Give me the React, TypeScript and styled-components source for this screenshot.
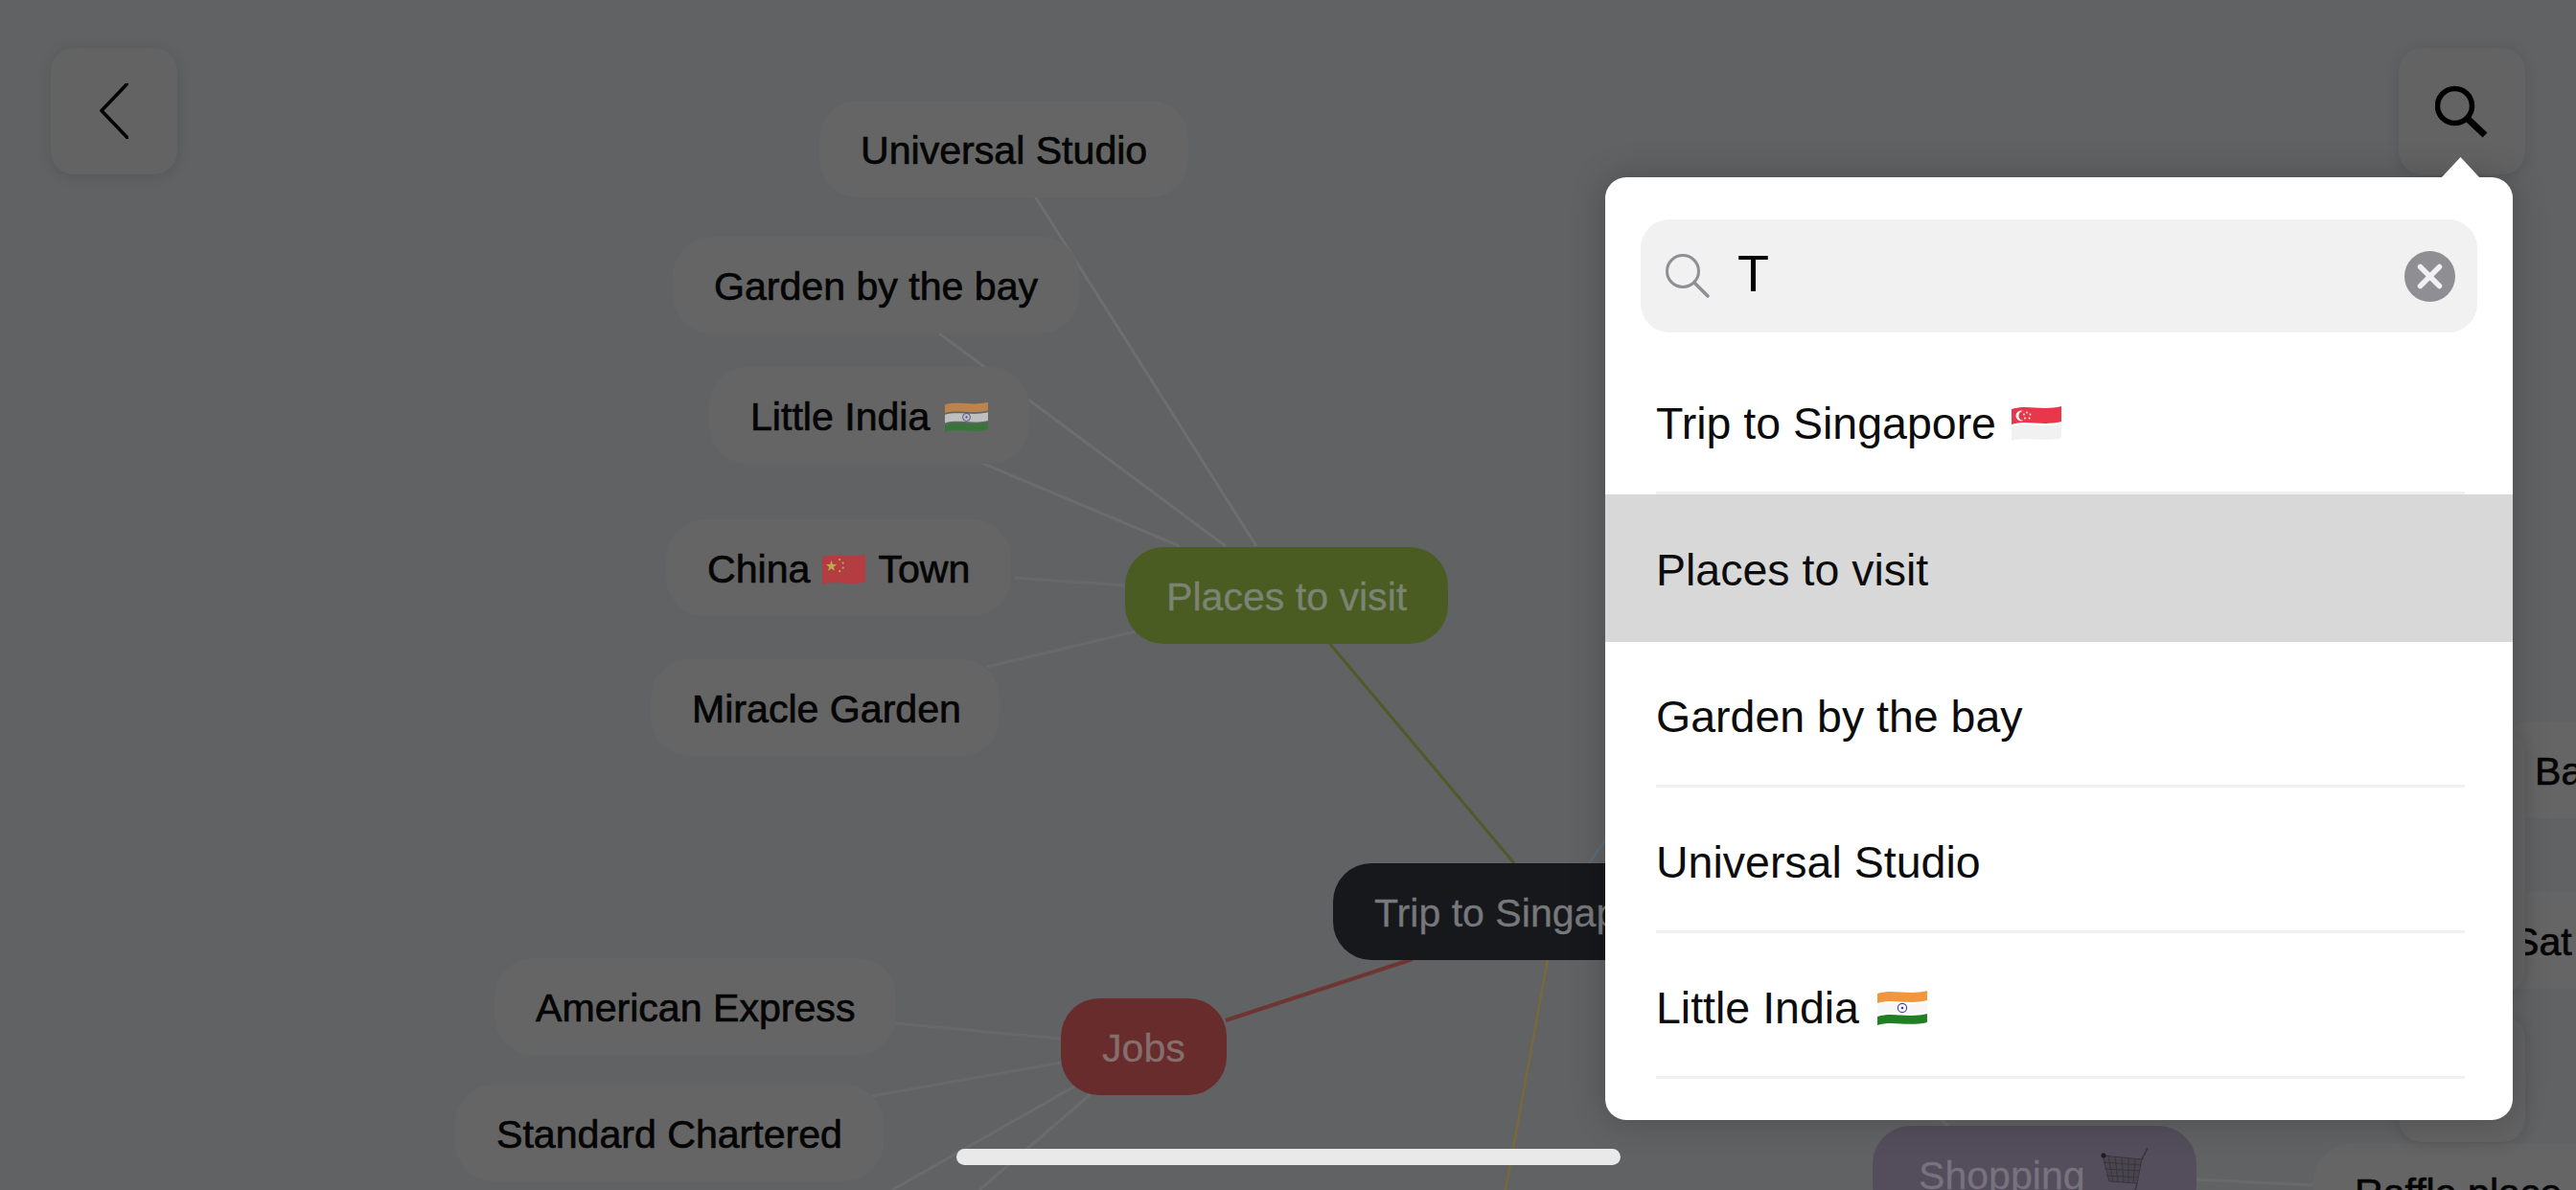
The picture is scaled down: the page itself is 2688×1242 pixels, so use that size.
import React from "react";
import styled, { createGlobalStyle } from "styled-components";

const GlobalStyle = createGlobalStyle`
  html, body {
    margin: 0;
    padding: 0;
    background: #616264;
    overflow: hidden;
  }
  body {
    font-family: "Liberation Sans", Arial, sans-serif;
  }
`;

type Tone = "leaf" | "root" | "green" | "red" | "purple";

const toneBg: Record<Tone, string> = {
  leaf: "#656566",
  root: "#17181b",
  green: "#4a5c22",
  red: "#682c2c",
  purple: "#544d5b",
};

const toneText: Record<Tone, string> = {
  leaf: "#050505",
  root: "#77787b",
  green: "#7b8473",
  red: "#866e6c",
  purple: "#77727d",
};

// wavy flag, the bands are cut along the same wave
const band = (w: number, y0: number, y1: number) => {
  const a = w * 0.3;
  const b = w * 0.62;
  return `M0 ${y0 + 3} C${a} ${y0 - 2} ${b} ${y0 + 5} ${w} ${y0} L${w} ${y1 - 3} C${b} ${y1 + 2} ${a} ${y1 - 5} 0 ${y1} Z`;
};

const FlagSvg = styled.svg<{ $dim?: boolean }>`
  flex: none;
  display: block;
  opacity: ${(p) => (p.$dim ? 0.62 : 1)};
`;

const IndiaFlag = ({ size, dim }: { size: number; dim?: boolean }) => (
  <FlagSvg $dim={dim} width={size} height={size * 0.73} viewBox="0 0 52 38">
    <path d={band(52, 1, 14)} fill="#f0963f" />
    <path d={band(52, 13, 26)} fill="#f7f7f7" />
    <path d={band(52, 25, 37)} fill="#1f7f22" />
    <circle cx="26" cy="19" r="4.6" fill="none" stroke="#3b3f98" strokeWidth="1.1" />
    <circle cx="26" cy="19" r="1.3" fill="#3b3f98" />
  </FlagSvg>
);

const SingaporeFlag = ({ size }: { size: number }) => (
  <FlagSvg width={size} height={size * 0.73} viewBox="0 0 52 38">
    <path d={band(52, 1, 20)} fill="#e8374a" />
    <path d={band(52, 19, 37)} fill="#f1f1f1" />
    <circle cx="10" cy="11" r="5.5" fill="#f7f7f7" />
    <circle cx="12.4" cy="11" r="5" fill="#e8374a" />
    <g fill="#f7f7f7">
      <circle cx="16" cy="7.5" r="0.9" />
      <circle cx="19.5" cy="9.5" r="0.9" />
      <circle cx="18.5" cy="13.5" r="0.9" />
      <circle cx="14" cy="13.5" r="0.9" />
      <circle cx="13" cy="9.5" r="0.9" />
    </g>
  </FlagSvg>
);

const ChinaFlag = ({ size }: { size: number }) => (
  <FlagSvg $dim width={size} height={size * 0.73} viewBox="0 0 52 38">
    <path d={band(52, 1, 37)} fill="#e3262c" />
    <path d="M11 8l1.7 4.6 4.9.2-3.9 3 1.4 4.7-4.1-2.7-4.1 2.7 1.4-4.7-3.9-3 4.9-.2z" fill="#f5d33c" />
    <g fill="#f5d33c">
      <circle cx="21" cy="7" r="1.3" />
      <circle cx="25" cy="11" r="1.3" />
      <circle cx="25" cy="17" r="1.3" />
      <circle cx="21" cy="21" r="1.3" />
    </g>
  </FlagSvg>
);

const CartIcon = () => (
  <FlagSvg width={52} height={62} viewBox="0 0 52 62">
    <g stroke="#38353c" fill="none" strokeWidth="1">
      <path d="M2 9L43 13L38 38L9 36Z" fill="#4a4650" />
      <path d="M8 9.5L13 36M15 10L18 37M22 11L24 37M29 12L29 38M36 12.5L34 38" />
      <path d="M3 16L42 19M4 23L41 25M6 30L39 32" />
      <path d="M43 13L49 1M38 38L36 46L9 46" strokeWidth="1.6" />
    </g>
    <circle cx="3" cy="9" r="2.5" fill="#1c1b1f" />
    <circle cx="34" cy="54" r="6" fill="#5f5a63" />
    <circle cx="14" cy="54" r="6" fill="#45414a" />
  </FlagSvg>
);

const Screen = styled.div`
  position: relative;
  width: 2688px;
  height: 1242px;
  overflow: hidden;
  background: #616264;
`;

const Links = styled.svg`
  position: absolute;
  left: 0;
  top: 0;
`;

const Node = styled.div<{ $x: number; $y: number; $tone: Tone; $w?: number; $pad?: number; $gap?: number }>`
  position: absolute;
  left: ${(p) => p.$x}px;
  top: ${(p) => p.$y}px;
  ${(p) => (p.$w ? `width: ${p.$w}px;` : "")}
  height: 101px;
  box-sizing: border-box;
  padding: 4px 43px 0 ${(p) => p.$pad ?? 43}px;
  display: flex;
  align-items: center;
  gap: ${(p) => p.$gap ?? 16}px;
  border-radius: 40px;
  background: ${(p) => toneBg[p.$tone]};
  color: ${(p) => toneText[p.$tone]};
  font-size: 41.1px;
  white-space: nowrap;
  -webkit-text-stroke: ${(p) => (p.$tone === "leaf" ? "0.7px" : "0.3px")} currentColor;
`;

// buttons float over the map, back on the left and the tools on the right
const Controls = styled.div`
  position: absolute;
  inset: 0;
  box-sizing: border-box;
  padding: 50px 53px;
  display: flex;
  justify-content: space-between;
  align-items: flex-start;
`;

const ToolColumn = styled.div`
  display: flex;
  flex-direction: column;
  gap: 23px;
`;

const ToolButton = styled.div<{ $h?: number; $push?: number }>`
  width: 132px;
  height: ${(p) => p.$h ?? 132}px;
  margin-top: ${(p) => p.$push ?? 0}px;
  border-radius: 24px;
  background: #636363;
  box-shadow: 0 2px 14px rgba(0, 0, 0, 0.12);
  display: flex;
  align-items: center;
  justify-content: center;
`;

const Panel = styled.div`
  position: absolute;
  left: 1675px;
  top: 185px;
  width: 947px;
  height: 984px;
  border-radius: 22px;
  background: #fff;
  box-shadow: 0 0 36px rgba(0, 0, 0, 0.22);

  &::before {
    content: "";
    position: absolute;
    left: 872px;
    top: -21px;
    width: 41px;
    height: 22px;
    background: #fff;
    clip-path: polygon(50% 0, 100% 100%, 0 100%);
  }
`;

const PanelBody = styled.div`
  height: 100%;
  border-radius: 22px;
  overflow: hidden;
  padding-top: 44px;
  box-sizing: border-box;
`;

const SearchField = styled.div`
  margin: 0 37px;
  height: 118px;
  box-sizing: border-box;
  padding: 0 23px 0 26px;
  border-radius: 30px;
  background: #f1f1f2;
  display: flex;
  align-items: center;
`;

const SearchText = styled.div`
  flex: 1;
  margin-left: 29px;
  margin-top: -6px;
  font-size: 54px;
  color: #000;
`;

const ResultList = styled.div`
  margin-top: 17px;
`;

const Row = styled.div<{ $active?: boolean; $h: number }>`
  height: ${(p) => p.$h}px;
  padding: 0 50px 0 53px;
  background: ${(p) => (p.$active ? "#d8d8d8" : "#fff")};
`;

const RowInner = styled.div<{ $plain?: boolean; $gap?: number }>`
  height: 100%;
  box-sizing: border-box;
  padding-top: 7px;
  display: flex;
  align-items: center;
  gap: ${(p) => p.$gap ?? 16}px;
  font-size: 46.5px;
  color: #0c0c0c;
  border-bottom: 3px solid ${(p) => (p.$plain ? "transparent" : "#f0f0f2")};
`;

const HomeBar = styled.div`
  position: absolute;
  left: 0;
  right: 0;
  bottom: 26px;
  margin: 0 auto;
  width: 693px;
  height: 17px;
  border-radius: 9px;
  background: #e9e9ea;
`;

type Link = [number, number, number, number, string, number];

const links: Link[] = [
  [1080, 205, 1311, 570, "#6b6f6d", 3],
  [980, 348, 1279, 570, "#6b6f6d", 3],
  [1024, 483, 1231, 570, "#696d6b", 3],
  [1058, 603, 1174, 611, "#686a6a", 3],
  [1030, 696, 1185, 659, "#686a6a", 3],
  [1387, 671, 1580, 901, "#4c5b28", 3],
  [1279, 1065, 1474, 1001, "#6e3532", 4],
  [1615, 1001, 1571, 1242, "#78693a", 2.5],
  [1658, 901, 1680, 870, "#5d6b7c", 2.5],
  [933, 1068, 1107, 1084, "#686969", 3],
  [910, 1144, 1107, 1109, "#686969", 3],
  [1121, 1134, 931, 1242, "#696c6c", 3],
  [1138, 1142, 1022, 1242, "#696c6c", 3],
  [2292, 1231, 2414, 1237, "#6a6a6a", 3],
  [2021, 1165, 2033, 1175, "#696b6b", 3],
];

export default function App() {
  return (
    <Screen>
      <GlobalStyle />
      <Links width="2688" height="1242" viewBox="0 0 2688 1242">
        {links.map(([x1, y1, x2, y2, color, width], i) => (
          <line key={i} x1={x1} y1={y1} x2={x2} y2={y2} stroke={color} strokeWidth={width} />
        ))}
      </Links>

      <Node $x={855} $y={105} $tone="leaf">Universal Studio</Node>
      <Node $x={702} $y={247} $tone="leaf">Garden by the bay</Node>
      <Node $x={740} $y={383} $tone="leaf">
        Little India
        <IndiaFlag size={45} dim />
      </Node>
      <Node $x={695} $y={542} $tone="leaf" $gap={13}>
        China
        <ChinaFlag size={45} />
        Town
      </Node>
      <Node $x={679} $y={688} $tone="leaf" $w={364}>Miracle Garden</Node>
      <Node $x={1174} $y={571} $tone="green">Places to visit</Node>
      <Node $x={1391} $y={901} $tone="root" $w={500}>Trip to Singapore</Node>
      <Node $x={1107} $y={1042} $tone="red">Jobs</Node>
      <Node $x={516} $y={1000} $tone="leaf">American Express</Node>
      <Node $x={475} $y={1132} $tone="leaf">Standard Chartered</Node>
      <Node $x={1954} $y={1175} $tone="purple" $w={338} $pad={48}>
        Shopping
        <CartIcon />
      </Node>
      <Node $x={2414} $y={1193} $tone="leaf" $w={400}>Raffle place</Node>
      <Node $x={2602} $y={753} $tone="leaf" $w={200}>Ba</Node>
      <Node $x={2579} $y={931} $tone="leaf" $w={200}>Sat</Node>

      <Controls>
        <ToolButton>
          <svg width="30" height="58" viewBox="0 0 30 58">
            <path d="M32 -3L2 28.500L32 60" fill="none" stroke="#000" strokeWidth="3.500" />
          </svg>
        </ToolButton>
        <ToolColumn>
          <ToolButton>
            <svg width="56" height="56" viewBox="0 0 56 56">
              <circle cx="20.500" cy="22.500" r="18" fill="none" stroke="#000" strokeWidth="5.500" />
              <line x1="34" y1="36" x2="52" y2="53" stroke="#000" strokeWidth="7" />
            </svg>
          </ToolButton>
          <ToolButton $h={275} $push={557} />
          <ToolButton />
        </ToolColumn>
      </Controls>

      <Panel>
        <PanelBody>
          <SearchField>
            <svg width="46" height="46" viewBox="0 0 46 46">
              <circle cx="18" cy="18" r="16.500" fill="none" stroke="#8e8e93" strokeWidth="3" />
              <line x1="30" y1="30" x2="44" y2="44" stroke="#8e8e93" strokeWidth="3.500" strokeLinecap="round" />
            </svg>
            <SearchText>T</SearchText>
            <svg width="53" height="53" viewBox="0 0 53 53">
              <circle cx="26.500" cy="26.500" r="26.500" fill="#8e8e93" />
              <path d="M16.500 16.500L36.500 36.500M36.500 16.500L16.500 36.500" stroke="#f1f1f2" strokeWidth="5.500" strokeLinecap="round" />
            </svg>
          </SearchField>
          <ResultList>
            <Row $h={152}>
              <RowInner>
                Trip to Singapore
                <SingaporeFlag size={52} />
              </RowInner>
            </Row>
            <Row $h={154} $active>
              <RowInner $plain>Places to visit</RowInner>
            </Row>
            <Row $h={152}>
              <RowInner>Garden by the bay</RowInner>
            </Row>
            <Row $h={152}>
              <RowInner>Universal Studio</RowInner>
            </Row>
            <Row $h={152}>
              <RowInner $gap={19}>
                Little India
                <IndiaFlag size={52} />
              </RowInner>
            </Row>
          </ResultList>
        </PanelBody>
      </Panel>

      <HomeBar />
    </Screen>
  );
}
